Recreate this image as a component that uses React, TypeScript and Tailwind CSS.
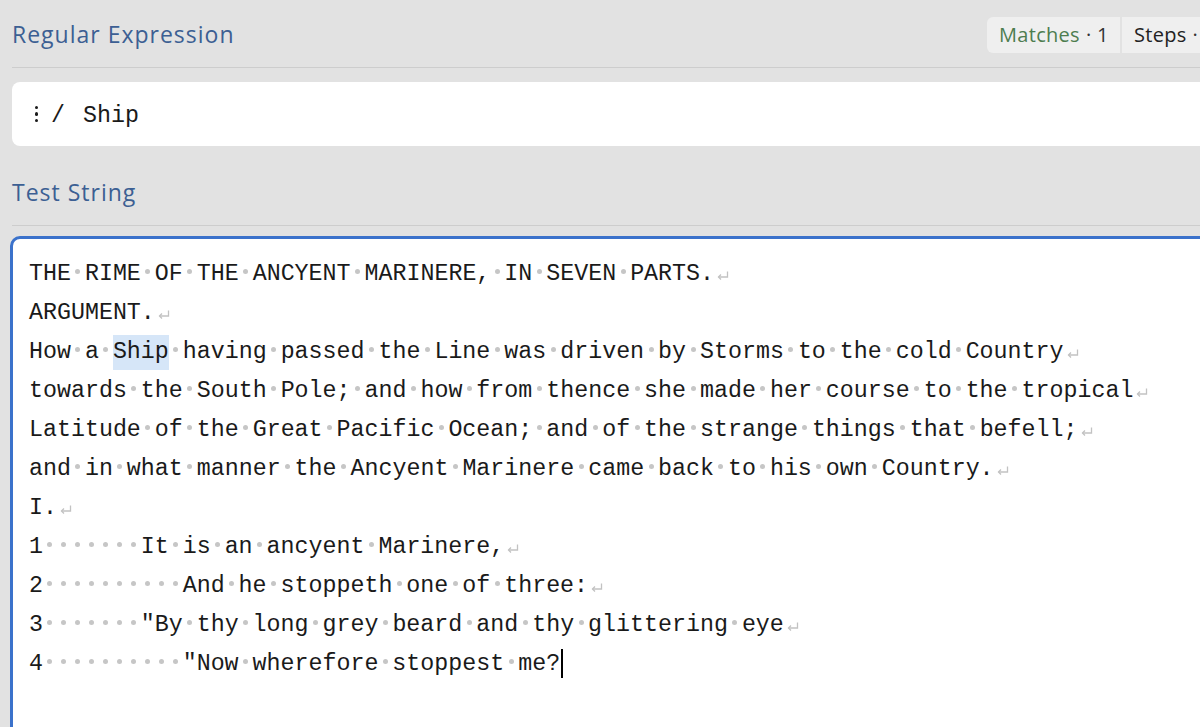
import { Fragment } from 'react'

const LINES = [
  'THE RIME OF THE ANCYENT MARINERE, IN SEVEN PARTS.',
  'ARGUMENT.',
  'How a Ship having passed the Line was driven by Storms to the cold Country',
  'towards the South Pole; and how from thence she made her course to the tropical',
  'Latitude of the Great Pacific Ocean; and of the strange things that befell;',
  'and in what manner the Ancyent Marinere came back to his own Country.',
  'I.',
  '1       It is an ancyent Marinere,',
  '2          And he stoppeth one of three:',
  '3       "By thy long grey beard and thy glittering eye',
  '4          "Now wherefore stoppest me?',
]

function Space() {
  return (
    <span className="inline-block w-[1ch] text-center">
      <span className="inline-block size-[5px] rounded-full bg-[#c6c6c6] align-[6px]" />
    </span>
  )
}

function Newline() {
  return (
    <svg width="14" height="12" viewBox="0 0 14 12" className="inline-block ml-[2px] align-[-2px]">
      <path d="M11.5 1.5 V7 H2.5" fill="none" stroke="#c2c2c2" strokeWidth="1.3" />
      <path d="M5 4.5 L2.5 7 L5 9.5" fill="none" stroke="#c2c2c2" strokeWidth="1.3" />
    </svg>
  )
}

function Line({ text, last }: { text: string; last: boolean }) {
  const parts = text.split(/( |Ship)/).filter((p) => p !== '')
  return (
    <div className="h-[39px] leading-[39px] whitespace-pre">
      {parts.map((p, i) => (
        <Fragment key={i}>
          {p === ' ' ? (
            <Space />
          ) : p === 'Ship' ? (
            <span className="inline-block leading-[35px] bg-[#d6e6f8]">Ship</span>
          ) : (
            p
          )}
        </Fragment>
      ))}
      {last ? (
        <span className="inline-block w-[1.5px] h-[29px] bg-black align-middle ml-[1px]" />
      ) : (
        <Newline />
      )}
    </div>
  )
}

function SectionTitle({ children, right }: { children: string; right?: React.ReactNode }) {
  return (
    <div className="flex items-center justify-between h-[68px] border-b border-[#cdcdcd]">
      <h2 className="pt-[2px] text-[23px] font-medium text-[#3c5f93] font-['Open_Sans',sans-serif] tracking-[1px]">
        {children}
      </h2>
      {right}
    </div>
  )
}

export default function App() {
  return (
    <div className="h-[727px] overflow-hidden bg-[#e2e2e2] pl-3">
      <div className="w-[1250px]">
        <SectionTitle
          right={
            <div className="flex items-stretch h-[36px] mt-[2px] font-['Open_Sans',sans-serif] text-[20px] tracking-[0.3px]">
              <div className="flex items-center w-[133px] pl-[12px] bg-[#efefef] rounded-l-md">
                <span className="text-[#4d7d4f]">Matches</span>
                <span className="text-[#333] ml-[6px]">· 1</span>
              </div>
              <div className="w-[2px] bg-[#e2e2e2]" />
              <div className="flex items-center w-[140px] pl-[12px] bg-[#efefef]">
                <span className="text-[#222]">Steps</span>
                <span className="text-[#333] ml-[6px]">· 7</span>
              </div>
            </div>
          }
        >
          Regular Expression
        </SectionTitle>

        <div className="mt-[14px] h-[64px] pt-[5px] bg-white rounded-lg flex items-center pl-[22px] font-['Liberation_Mono',monospace] text-[23.3px] text-[#1a1a1a]">
          <span className="flex flex-col items-center gap-[3px] w-[5px] mb-[5px]">
            <span className="size-[3.5px] rounded-full bg-[#1a1a1a]" />
            <span className="size-[3.5px] rounded-full bg-[#1a1a1a]" />
            <span className="size-[3.5px] rounded-full bg-[#1a1a1a]" />
          </span>
          <span className="ml-[12px] w-[14px] text-center">/</span>
          <span className="ml-[18px]">Ship</span>
        </div>

        <div className="mt-3">
          <SectionTitle>Test String</SectionTitle>
        </div>

        <div className="mt-[10px] -ml-0.5 h-[540px] bg-white border-[3px] border-[#3b72cb] rounded-[10px] pl-4 pt-4 font-['Liberation_Mono',monospace] text-[23.3px] text-[#1a1a1a]">
          {LINES.map((l, i) => (
            <Line key={i} text={l} last={i === LINES.length - 1} />
          ))}
        </div>
      </div>
    </div>
  )
}
